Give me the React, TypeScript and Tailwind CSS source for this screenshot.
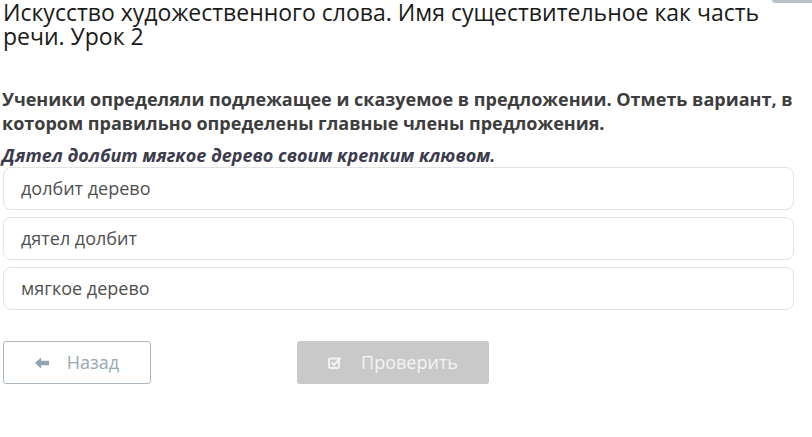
import React from 'react';

const options = ['долбит дерево', 'дятел долбит', 'мягкое дерево'];

const App = () => {
  return (
    <div className="relative w-[812px] h-[437px] overflow-hidden bg-white font-['Open_Sans',sans-serif]">
      <div className="absolute top-0 right-0 w-[40px] h-[3px] rounded-bl bg-[#b8c4ca]" />

      <h1 className="pl-[3px] pr-[20px] text-[23px] leading-[24px] font-normal text-[#1a1a1a]">
        Искусство художественного слова. Имя существительное как часть речи. Урок 2
      </h1>

      <div className="mt-[39px] pl-[2px] pr-[10px]">
        <p className="text-[18px] leading-[24px] font-bold text-[#3d3d3d]">
          Ученики определяли подлежащее и сказуемое в предложении. Отметь вариант, в котором правильно определены главные члены предложения.
        </p>
        <p className="mt-[9px] text-[18px] leading-[22px] font-bold italic text-[#3b3b4c]">
          Дятел долбит мягкое дерево своим крепким клювом.
        </p>
      </div>

      <div className="mt-[1px] w-[791px] ml-[3px] flex flex-col gap-[7px]">
        {options.map((o) => (
          <div
            key={o}
            className="h-[43px] flex items-center px-[17px] rounded-[8px] border border-[#e2e2e2] text-[18px] text-[#505050]"
          >
            {o}
          </div>
        ))}
      </div>

      <div className="mt-[31px] ml-[3px] flex items-center gap-[146px]">
        <button className="w-[148px] h-[43px] flex items-center justify-center gap-[18px] rounded-[3px] border border-[#aab7bf] text-[18px] text-[#98a9b4]">
          <svg width="14" height="12" viewBox="0 0 14 12" className="text-[#8ea4af]">
            <path d="M0 6 L6 0.5 L6 3.8 L14 3.8 L14 8.2 L6 8.2 L6 11.5 Z" fill="currentColor" />
          </svg>
          Назад
        </button>
        <button className="w-[192px] h-[43px] flex items-center justify-center gap-[19px] rounded-[3px] bg-[#c9c9c9] text-[18px] text-[#f4f4f4]">
          <svg width="14" height="13" viewBox="0 0 14 13" className="text-[#f4f4f4]">
            <rect x="1" y="2.5" width="10" height="9.5" rx="1.2" fill="none" stroke="currentColor" strokeWidth="1.8" />
            <path d="M3.5 6.5 L6 9 L12.5 2" fill="none" stroke="currentColor" strokeWidth="2" />
          </svg>
          Проверить
        </button>
      </div>
    </div>
  );
};

export default App;
